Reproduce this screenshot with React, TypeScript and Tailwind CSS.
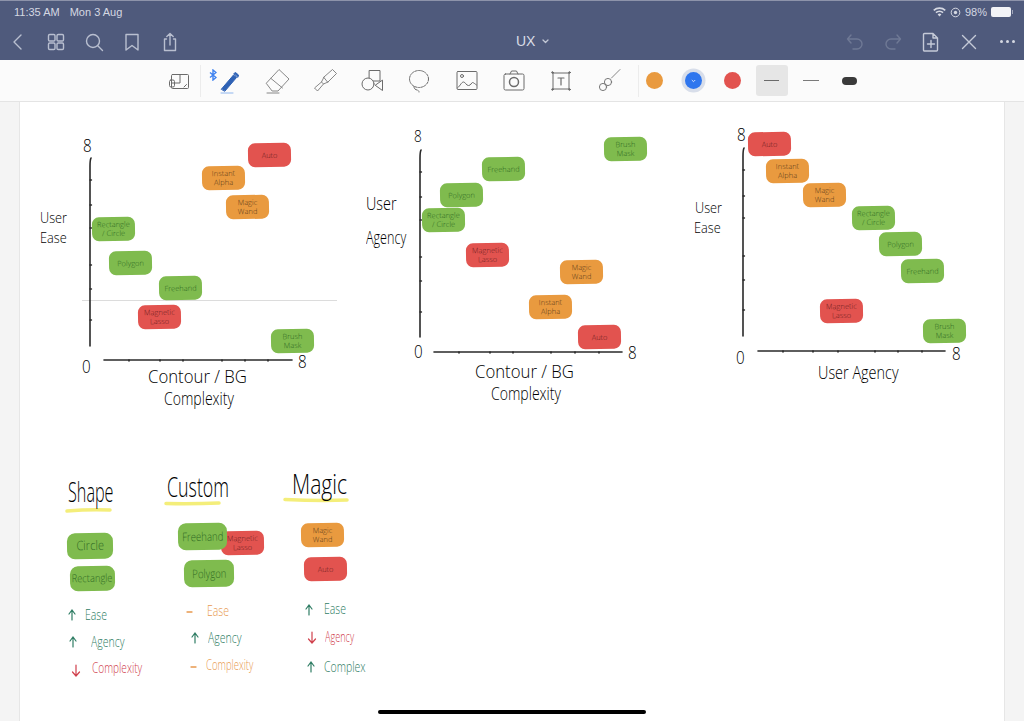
import React, { FunctionComponent, ReactNode } from "react";

const GREEN = "bg-[#7fbb4e] text-[#2f6a24]";
const ORANGE = "bg-[#e99a3f] text-[#5e3d1a]";
const RED = "bg-[#e2534f] text-[#6e1f22]";

const HAND = "font-['Open_Sans',sans-serif] font-light";

type TagKind = "auto" | "instant" | "wand" | "rect" | "polygon" | "freehand" | "lasso" | "brush";

const KINDS: Record<TagKind, { color: string; lines: string[] }> = {
  auto: { color: RED, lines: ["Auto"] },
  instant: { color: ORANGE, lines: ["Instant", "Alpha"] },
  wand: { color: ORANGE, lines: ["Magic", "Wand"] },
  rect: { color: GREEN, lines: ["Rectangle", "/ Circle"] },
  polygon: { color: GREEN, lines: ["Polygon"] },
  freehand: { color: GREEN, lines: ["Freehand"] },
  lasso: { color: RED, lines: ["Magnetic", "Lasso"] },
  brush: { color: GREEN, lines: ["Brush", "Mask"] },
};

// place of each sticker on the sheet, in screenshot coordinates
const PLOT_TAGS: [TagKind, string][] = [
  ["auto", "left-[248px] top-[143px]"],
  ["instant", "left-[202px] top-[166px]"],
  ["wand", "left-[226px] top-[195px]"],
  ["rect", "left-[92px] top-[217px]"],
  ["polygon", "left-[109px] top-[251px]"],
  ["freehand", "left-[159px] top-[276px]"],
  ["lasso", "left-[138px] top-[305px]"],
  ["brush", "left-[271px] top-[329px]"],

  ["brush", "left-[604px] top-[137px]"],
  ["freehand", "left-[482px] top-[157px]"],
  ["polygon", "left-[440px] top-[183px]"],
  ["rect", "left-[422px] top-[208px]"],
  ["lasso", "left-[466px] top-[243px]"],
  ["wand", "left-[560px] top-[260px]"],
  ["instant", "left-[529px] top-[295px]"],
  ["auto", "left-[578px] top-[325px]"],

  ["auto", "left-[748px] top-[132px]"],
  ["instant", "left-[766px] top-[159px]"],
  ["wand", "left-[803px] top-[183px]"],
  ["rect", "left-[852px] top-[206px]"],
  ["polygon", "left-[879px] top-[232px]"],
  ["freehand", "left-[901px] top-[259px]"],
  ["lasso", "left-[820px] top-[299px]"],
  ["brush", "left-[923px] top-[319px]"],

  ["wand", "left-[301px] top-[523px]"],
  ["auto", "left-[304px] top-[557px]"],
  ["lasso", "left-[221px] top-[531px]"],
];

const Tag: FunctionComponent<{ kind: TagKind; place: string }> = ({ kind, place }) => {
  const { color, lines } = KINDS[kind];
  return (
    <div
      className={`absolute ${place} flex h-[24px] w-[43px] -rotate-1 flex-col items-center justify-center rounded-[7px] text-[7.5px] leading-[9px] ${color} ${HAND}`}
    >
      {lines.map((line) => (
        <span key={line} className="whitespace-nowrap">
          {line}
        </span>
      ))}
    </div>
  );
};

const BigTag: FunctionComponent<{ place: string; children: ReactNode }> = ({ place, children }) => (
  <div
    className={`absolute ${place} flex -rotate-1 items-center justify-center rounded-[8px] ${GREEN} ${HAND}`}
  >
    {children}
  </div>
);

const Note: FunctionComponent<{ place: string; children: ReactNode }> = ({ place, children }) => (
  <span className={`absolute ${place} origin-left whitespace-nowrap leading-none ${HAND}`}>{children}</span>
);

const Axes: FunctionComponent<{
  x: number;
  y0: number;
  y1: number;
  hx0: number;
  hx1: number;
  hy: number;
  yTicks: number[];
  xTicks: number[];
}> = ({ x, y0, y1, hx0, hx1, hy, yTicks, xTicks }) => (
  <g stroke="#2a2a2a" fill="none" strokeLinecap="round">
    <path d={`M${x + 1} ${y0} Q${x} ${y0 + 2} ${x} ${y0 + 8} L${x} ${y1}`} strokeWidth="1.6" />
    <path d={`M${hx0} ${hy} L${hx1} ${hy}`} strokeWidth="1.6" />
    {yTicks.map((t) => (
      <path key={t} d={`M${x} ${t} h1.5`} strokeWidth="1.4" />
    ))}
    {xTicks.map((t) => (
      <path key={t} d={`M${t} ${hy} v1`} strokeWidth="1.6" />
    ))}
  </g>
);

const Arrow: FunctionComponent<{ x: number; y: number; down?: boolean; color: string }> = ({
  x,
  y,
  down,
  color,
}) => (
  <path
    d={
      down
        ? `M${x} ${y - 6} V${y + 5} M${x - 3.5} ${y + 1} L${x} ${y + 5} L${x + 3.5} ${y + 1}`
        : `M${x} ${y + 5} V${y - 5} M${x - 3} ${y - 1} L${x} ${y - 5} L${x + 3} ${y - 1}`
    }
    stroke={color}
    strokeWidth="1.2"
    fill="none"
    strokeLinecap="round"
  />
);

const Sketch = () => (
  <svg className="absolute inset-0" width="1024" height="721" viewBox="0 0 1024 721">
    <path d="M82 300.5H337" stroke="#dcdcdc" strokeWidth="1" />
    <Axes x={90} y0={158} y1={346} hx0={104} hx1={292} hy={360} yTicks={[180, 205, 228, 265, 289, 320]} xTicks={[129, 160, 183, 222, 245, 268]} />
    <Axes x={420} y0={150} y1={337} hx0={434} hx1={622} hy={352} yTicks={[172, 197, 220, 257, 281, 312]} xTicks={[459, 490, 513, 551, 575, 599]} />
    <Axes x={743} y0={148} y1={336} hx0={758} hx1={945} hy={351} yTicks={[170, 196, 218, 256, 280, 310]} xTicks={[783, 813, 838, 875, 898, 922]} />
    <path d="M67 511Q90 509 110 510" stroke="#f4ee7a" strokeWidth="3.5" fill="none" strokeLinecap="round" />
    <path d="M166 503.5Q195 504 219 503" stroke="#f4ee7a" strokeWidth="3.5" fill="none" strokeLinecap="round" />
    <path d="M285 499.5Q320 501 347 500" stroke="#f4ee7a" strokeWidth="3.5" fill="none" strokeLinecap="round" />
    <Arrow x={72} y={615} color="#2f7d64" />
    <Arrow x={73} y={642} color="#2f7d64" />
    <Arrow x={76} y={671} down color="#d0404c" />
    <Arrow x={195} y={638} color="#2f7d64" />
    <Arrow x={309} y={610} color="#2f7d64" />
    <Arrow x={312} y={638} down color="#d0404c" />
    <Arrow x={311} y={667} color="#2f7d64" />
    <path d="M187 612h5M191 667h5" stroke="#e8994f" strokeWidth="1.3" strokeLinecap="round" />
  </svg>
);

const ic = { fill: "none", stroke: "currentColor", strokeWidth: 1.3, strokeLinecap: "round", strokeLinejoin: "round" } as const;

const NavIcon: FunctionComponent<{ children: ReactNode; w?: string }> = ({ children, w = "w-[38px]" }) => (
  <div className={`flex ${w} justify-center`}>
    <svg width="22" height="22" viewBox="0 0 22 22" {...ic} strokeWidth={1.4}>
      {children}
    </svg>
  </div>
);

const ToolIcon: FunctionComponent<{ children: ReactNode }> = ({ children }) => (
  <div className="flex w-[47.4px] justify-center text-[#6b6b6b]">
    <svg width="26" height="26" viewBox="0 0 26 26" {...ic} strokeWidth={1}>
      {children}
    </svg>
  </div>
);

const Divider = () => <div className="h-[32px] w-px bg-[#ececec]" />;

export default function App() {
  return (
    <div className="flex h-[721px] w-[1024px] flex-col overflow-hidden bg-[#f4f4f4] font-['Liberation_Sans',sans-serif]">
      <header className="h-[60px] shrink-0 border-t border-[#8d93aa] bg-[#4f5a7c] text-[#d5d8e2]">
        <div className="flex h-[22px] items-center justify-between pl-[14px] pr-[11px] text-[11px]">
          <div className="flex gap-[10px]">
            <span>11:35 AM</span>
            <span>Mon 3 Aug</span>
          </div>
          <div className="flex items-center gap-[4px]">
            <svg width="13" height="10" viewBox="0 0 13 10" fill="currentColor">
              <path d="M6.5 9.5 4.6 7.4a2.8 2.8 0 0 1 3.8 0zM3.5 6.3 2.4 5.1a6 6 0 0 1 8.2 0L9.5 6.3a4.4 4.4 0 0 0-6 0zM1.3 4 .2 2.8a9.2 9.2 0 0 1 12.6 0L11.7 4a7.6 7.6 0 0 0-10.4 0z" />
            </svg>
            <svg width="11" height="11" viewBox="0 0 11 11" fill="none" stroke="currentColor">
              <circle cx="5.5" cy="5.5" r="4.3" />
              <circle cx="5.5" cy="5.5" r="1.7" fill="currentColor" stroke="none" />
            </svg>
            <span>98%</span>
            <div className="flex items-center">
              <div className="h-[10px] w-[20px] rounded-[2px] bg-[#f2f3f7]" />
              <div className="ml-px h-[4px] w-px bg-[#a0a6bb]" />
            </div>
          </div>
        </div>
        <div className="flex h-[37px] items-center">
          <div className="-ml-[1px] flex w-[508px] items-center text-[#b9bfd0]">
            <NavIcon>
              <path d="M14 4 7 11l7 7" />
            </NavIcon>
            <NavIcon>
              <rect x="3.5" y="3.5" width="6.5" height="6.5" rx="1.2" />
              <rect x="12" y="3.5" width="6.5" height="6.5" rx="1.2" />
              <rect x="3.5" y="12" width="6.5" height="6.5" rx="1.2" />
              <rect x="12" y="12" width="6.5" height="6.5" rx="1.2" />
            </NavIcon>
            <NavIcon>
              <circle cx="10" cy="10" r="6.5" />
              <path d="m15 15 4.5 4.5" />
            </NavIcon>
            <NavIcon>
              <path d="M5 3.5h12v15.500l-6-4.500-6 4.500z" />
            </NavIcon>
            <NavIcon>
              <path d="M7.500 8H5.500v11.500h11V8h-2M11 14V2.500M7.800 5.500 11 2.500l3.200 3" />
            </NavIcon>
          </div>
          <span className="ml-[9px] text-[14px] text-[#d9dce6]">UX</span>
          <svg className="ml-[7px] text-[#c3c8d6]" width="7" height="5" viewBox="0 0 7 5" {...ic}>
            <path d="m1 1 2.500 2.500L6 1" />
          </svg>
          <div className="-mr-[2px] ml-auto flex items-center">
            <div className="flex items-center text-[#6f7995]">
              <NavIcon>
                <path d="M7 4 3.500 8 7 12M3.500 8H13a5 5 0 0 1 0 10H9" />
              </NavIcon>
              <NavIcon>
                <path d="m15 4 3.500 4L15 12M18.500 8H9a5 5 0 0 0 0 10h4" />
              </NavIcon>
            </div>
            <div className="flex items-center text-[#c5cad8]">
              <NavIcon>
                <path d="M4.500 2.500h8.500l4.500 4.500v12a1 1 0 0 1-1 1h-12a1 1 0 0 1-1-1v-15.500a1 1 0 0 1 1-1zM13 2.500v4.500h4.500M11 9.500v7M7.500 13h7" />
              </NavIcon>
              <NavIcon>
                <path d="m4.500 4.500 13 13M17.500 4.500l-13 13" />
              </NavIcon>
              <div className="flex w-[38px] justify-center gap-[3px]">
                <div className="h-[3px] w-[3px] rounded-full bg-[#d5d8e2]" />
                <div className="h-[3px] w-[3px] rounded-full bg-[#d5d8e2]" />
                <div className="h-[3px] w-[3px] rounded-full bg-[#d5d8e2]" />
              </div>
            </div>
          </div>
        </div>
      </header>

      <nav className="flex h-[42px] shrink-0 items-center border-b border-[#e4e4e4] bg-[#fbfbfb]">
        <div className="flex w-[192px] justify-end text-[#6b6b6b]">
          <svg width="26" height="26" viewBox="0 0 26 26" {...ic} strokeWidth={1}>
            <rect x="5.500" y="6.500" width="17" height="14" rx="1" />
            <path d="M14 6.500v8.500H5.500M18 19l2.500-2.500" />
            <rect x="3.500" y="12" width="5" height="7" rx="1.500" />
          </svg>
        </div>
        <div className="ml-[8px] flex items-center">
          <Divider />
        </div>
        <div className="relative ml-[5px] flex items-center">
          <ToolIcon>
            <path d="M4.500 21 16.500 7l3 2.500L8 23z" fill="#2f62b5" stroke="#2f62b5" />
            <path d="m17 5.500 1.500-1 3 2.500-.5 2z" fill="#2f62b5" stroke="#2f62b5" />
            <path d="M4 25h12" stroke="#8fb6ee" />
          </ToolIcon>
          <span className="absolute left-[3px] top-[1px] text-[#3e82f0]">
            <svg width="8" height="12" viewBox="0 0 8 12" fill="none" stroke="currentColor" strokeWidth="1.400">
              <path d="m1 3.500 6 5L4 11V1l3 2.500-6 5" />
            </svg>
          </span>
          <ToolIcon>
            <path d="M2.500 15 15 1.500 25 11 14 23H8.500z" strokeWidth=".8" />
            <path d="m7 10.500 11.500 9.500M3 25h12" strokeWidth=".8" />
          </ToolIcon>
          <ToolIcon>
            <path d="M13 9 21.500 1.500 25.500 5.500 17 14zM13 9l-2.500 5 2 2 4.500-2M10.500 14l-7 6 3 3 6-7" strokeWidth=".8" />
          </ToolIcon>
          <ToolIcon>
            <rect x="10.500" y="2.500" width="10.500" height="10.500" />
            <circle cx="9" cy="16" r="6" fill="#fbfbfb" />
            <path d="m23.500 12.500v10l-7-5z" fill="#fbfbfb" />
          </ToolIcon>
          <ToolIcon>
            <ellipse cx="13" cy="11" rx="9.500" ry="8.500" strokeDasharray="2 1.200" />
            <path d="M8 18.500c0 2 1 3 3 3.500 2 .5 2 1.500 2 2" strokeDasharray="2 1.200" />
          </ToolIcon>
          <ToolIcon>
            <rect x="3" y="3.500" width="20" height="18" rx="1" />
            <circle cx="8" cy="8" r="1.500" />
            <path d="M3.500 20c3-2.500 4-6 6-6s2.500 3.500 5 3.500 3-3 4-3 2.500 1.500 4 2.500" />
          </ToolIcon>
          <ToolIcon>
            <rect x="3" y="6" width="20" height="16" rx="1.500" />
            <path d="M9 6l1.500-3h5L17 6" />
            <circle cx="13" cy="14" r="4.500" strokeWidth="1.500" />
          </ToolIcon>
          <ToolIcon>
            <path d="M5 5h16M5 21h16M5 5v16M21 5v16" />
            <path d="M10 10h6M13 10v7" strokeWidth="1.200" />
            <circle cx="4.500" cy="4.500" r=".8" fill="currentColor" />
            <circle cx="21.500" cy="4.500" r=".8" fill="currentColor" />
            <circle cx="4.500" cy="21.500" r=".8" fill="currentColor" />
            <circle cx="21.500" cy="21.500" r=".8" fill="currentColor" />
          </ToolIcon>
          <ToolIcon>
            <path d="M24 1.500 15.500 10" strokeWidth=".8" />
            <circle cx="7" cy="19" r="3.600" strokeWidth=".9" />
            <circle cx="12" cy="14" r="3.600" strokeWidth=".9" />
          </ToolIcon>
        </div>
        <div className="ml-[5px] flex items-center">
          <Divider />
        </div>
        <div className="ml-[7px] flex items-center gap-[22px]">
          <div className="h-[17px] w-[17px] rounded-full bg-[#e99a3f]" />
          <div className="flex h-[17px] w-[17px] items-center justify-center rounded-full bg-[#2f76ee] ring-[3.5px] ring-[#d8deea]">
            <svg width="5" height="4" viewBox="0 0 5 4" fill="none" stroke="#dfe9ff" strokeWidth="0.900">
              <path d="m.8 1 1.700 1.700L4.200 1" />
            </svg>
          </div>
          <div className="h-[17px] w-[17px] rounded-full bg-[#e2534f]" />
        </div>
        <div className="ml-[15px] flex h-[31px] w-[32px] items-center justify-center rounded-[3px] bg-[#e6e6e6]">
          <div className="h-[1.500px] w-[15px] bg-[#6a6a6a]" />
        </div>
        <div className="ml-[15px] h-px w-[16px] bg-[#7a7a7a]" />
        <div className="ml-[23px] h-[8px] w-[15px] rounded-full bg-[#3a3a3a]" />
      </nav>

      <main className="relative mx-[19px] flex-1 border-x border-[#e6e6e6] bg-white">
        {/* free canvas, coordinates are the screenshot's */}
        <div className="absolute left-[-20px] top-[-102px] h-[721px] w-[1024px] text-black">
          <Sketch />

          {PLOT_TAGS.map(([kind, place]) => (
            <Tag key={place} kind={kind} place={place} />
          ))}

          <BigTag place="left-[67px] top-[533px] h-[26px] w-[46px] text-[13px]">
            <span className="scale-x-[0.85]">Circle</span>
          </BigTag>
          <BigTag place="left-[70px] top-[566px] h-[25px] w-[45px] text-[11px]">
            <span className="scale-x-[0.85]">Rectangle</span>
          </BigTag>
          <BigTag place="left-[178px] top-[523px] h-[27px] w-[49px] text-[12px]">
            <span className="scale-x-[0.8]">Freehand</span>
          </BigTag>
          <BigTag place="left-[184px] top-[560px] h-[27px] w-[50px] text-[12px]">
            <span className="scale-x-[0.8]">Polygon</span>
          </BigTag>

          <Note place="left-[83px] top-[136px] text-[19px] scale-x-[0.8]">8</Note>
          <Note place="left-[82px] top-[357px] text-[19px] scale-x-[0.8]">0</Note>
          <Note place="left-[298px] top-[352px] text-[19px] scale-x-[0.8]">8</Note>
          <Note place="left-[40px] top-[210px] text-[15px] scale-x-[0.85]">User</Note>
          <Note place="left-[40px] top-[230px] text-[15px] scale-x-[0.85]">Ease</Note>
          <Note place="left-[148px] top-[367px] text-[18px] scale-x-[0.93]">Contour / BG</Note>
          <Note place="left-[164px] top-[389px] text-[18px] scale-x-[0.78]">Complexity</Note>

          <Note place="left-[414px] top-[127px] text-[17px] scale-x-[0.8]">8</Note>
          <Note place="left-[414px] top-[342px] text-[19px] scale-x-[0.8]">0</Note>
          <Note place="left-[628px] top-[343px] text-[19px] scale-x-[0.8]">8</Note>
          <Note place="left-[366px] top-[194px] text-[18px] scale-x-[0.8]">User</Note>
          <Note place="left-[366px] top-[228px] text-[18px] scale-x-[0.7]">Agency</Note>
          <Note place="left-[475px] top-[362px] text-[18px] scale-x-[0.93]">Contour / BG</Note>
          <Note place="left-[491px] top-[384px] text-[18px] scale-x-[0.78]">Complexity</Note>

          <Note place="left-[737px] top-[125px] text-[19px] scale-x-[0.8]">8</Note>
          <Note place="left-[736px] top-[348px] text-[19px] scale-x-[0.8]">0</Note>
          <Note place="left-[952px] top-[344px] text-[19px] scale-x-[0.8]">8</Note>
          <Note place="left-[695px] top-[200px] text-[15px] scale-x-[0.85]">User</Note>
          <Note place="left-[694px] top-[220px] text-[15px] scale-x-[0.85]">Ease</Note>
          <Note place="left-[818px] top-[363px] text-[19px] scale-x-[0.76]">User Agency</Note>

          <Note place="left-[68px] top-[478px] text-[27px] scale-x-[0.6]">Shape</Note>
          <Note place="left-[167px] top-[473px] text-[27px] scale-x-[0.66]">Custom</Note>
          <Note place="left-[292px] top-[470px] text-[27px] scale-x-[0.78]">Magic</Note>

          <Note place="left-[85px] top-[608px] text-[14px] text-[#2f7d64] scale-x-[0.75]">Ease</Note>
          <Note place="left-[91px] top-[635px] text-[14px] text-[#2f7d64] scale-x-[0.75]">Agency</Note>
          <Note place="left-[92px] top-[661px] text-[14px] text-[#d0404c] scale-x-[0.72]">Complexity</Note>
          <Note place="left-[207px] top-[604px] text-[14px] text-[#e8994f] scale-x-[0.75]">Ease</Note>
          <Note place="left-[208px] top-[631px] text-[14px] text-[#2f7d64] scale-x-[0.75]">Agency</Note>
          <Note place="left-[206px] top-[658px] text-[14px] text-[#e8994f] scale-x-[0.68]">Complexity</Note>
          <Note place="left-[324px] top-[602px] text-[14px] text-[#2f7d64] scale-x-[0.75]">Ease</Note>
          <Note place="left-[325px] top-[630px] text-[14px] text-[#d0404c] scale-x-[0.65]">Agency</Note>
          <Note place="left-[324px] top-[660px] text-[14px] text-[#2f7d64] scale-x-[0.75]">Complex</Note>

          {/* home indicator */}
          <div className="absolute left-[378px] top-[710px] h-[4px] w-[268px] rounded-full bg-black" />
        </div>
      </main>
    </div>
  );
}
